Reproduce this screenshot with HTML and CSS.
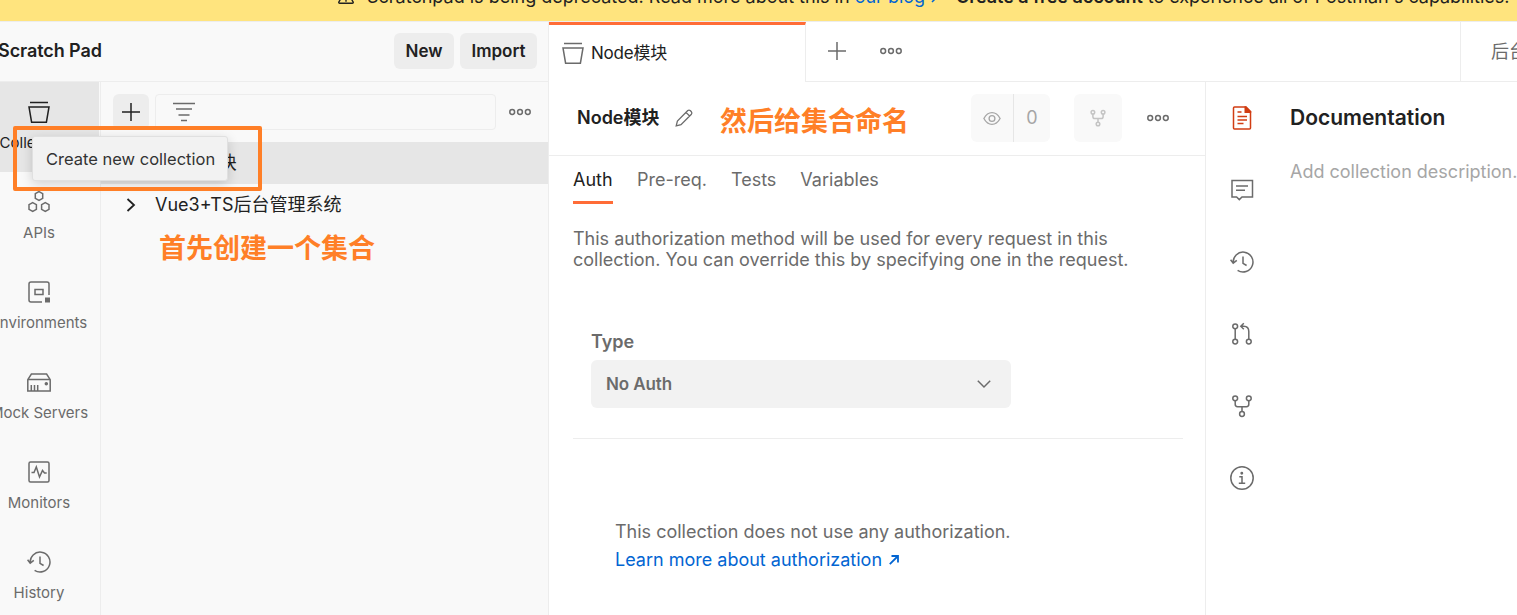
FILE: index.html
```html
<!DOCTYPE html>
<html lang="en">
<head>
<meta charset="utf-8">
<title>Scratch Pad</title>
<link rel="stylesheet" href="styles.css">
</head>
<body>
<svg class="defs" aria-hidden="true">
  <symbol id="i-collection" viewBox="0 0 24 24"><path d="M3 2.5h18M2 7h20l-2.6 15.2H4.6z"/></symbol>
  <symbol id="i-dots" viewBox="0 0 22 8"><circle cx="3.2" cy="4" r="2.4"/><circle cx="11" cy="4" r="2.4"/><circle cx="18.8" cy="4" r="2.4"/></symbol>
  <symbol id="i-plus" viewBox="0 0 18 18"><path d="M9 0v18M0 9h18"/></symbol>
  <symbol id="i-history" viewBox="0 0 24 24"><path d="M3.2 13A9.9 9.9 0 1 1 7.6 20.3M.6 9.8l2.6 3.4 3.6-2.8M13 6.5v6.8l3.6 2.2"/></symbol>
  <symbol id="i-fork" viewBox="0 0 24 24"><circle cx="5.2" cy="4.3" r="2.4"/><circle cx="18.8" cy="4.3" r="2.4"/><circle cx="12" cy="20" r="2.4"/><path d="M5.2 6.7v3.6q0 2.4 2.4 2.4h8.8q2.4 0 2.4-2.4V6.7M12 12.7v4.9"/></symbol>
</svg>

<div class="banner">
  <svg class="warn" viewBox="0 0 20 18"><path d="M10 1.5 18 15.2Q18.4 16.5 17 16.5H3Q1.6 16.5 2 15.2zM10 7v4.5M10 13v1.8"/></svg>
  <span class="b1">Scratchpad is being deprecated. Read more about this in <a class="link">our blog</a></span>
  <svg class="barrow" viewBox="0 0 10 10"><path d="M1 9 9 1M3 1h6v6"/></svg>
  <span class="b2"><b>Create a free account</b> to experience all of Postman's capabilities.</span>
</div>

<div class="app">
  <aside class="side">
    <header class="side-head">
      <h1>Scratch Pad</h1>
      <button class="btn new">New</button>
      <button class="btn import">Import</button>
    </header>
    <div class="side-body">
      <nav class="rail">
        <div class="rail-item active"><svg class="ic dark" viewBox="0 0 24 24"><use href="#i-collection"/></svg><span>Collections</span></div>
        <div class="rail-item"><svg class="ic" viewBox="0 0 24 24"><path d="M12 1.6 15.7 3.7V8.3L12 10.4 8.3 8.3V3.7zM5.7 12.6 9.4 14.7V19.3L5.7 21.4 2 19.3V14.7zM18.3 12.6 22 14.7V19.3L18.3 21.4 14.6 19.3V14.7z"/></svg><span>APIs</span></div>
        <div class="rail-item"><svg class="ic" viewBox="0 0 24 24"><path d="M15 22H4q-2 0-2-2V4q0-2 2-2h16q2 0 2 2v11M8 9.5h8v5H8z"/><path class="block" d="M18 17.500h5v5h-5z"/></svg><span>Environments</span></div>
        <div class="rail-item"><svg class="ic" viewBox="0 0 24 24"><path d="M.8 9.6 4.4 4h15.2l3.6 5.6V21H.8zM.8 9.6h22.4M4.3 15v6M7.5 15v6M10.7 15v6"/><circle class="solid" cx="19.3" cy="13.8" r="1"/></svg><span>Mock Servers</span></div>
        <div class="rail-item"><svg class="ic" viewBox="0 0 24 24"><rect x="2" y="2" width="20" height="20" rx="1.5"/><path d="M4.5 12.5H7L9.3 7l3.2 10 3-6.5 2 2.5h2.2"/></svg><span>Monitors</span></div>
        <div class="rail-item"><svg class="ic" viewBox="0 0 24 24"><use href="#i-history"/></svg><span>History</span></div>
      </nav>
      <section class="tree">
        <div class="tree-tools">
          <button class="add"><svg class="plus dark" viewBox="0 0 18 18"><use href="#i-plus"/></svg></button>
          <div class="filter"><svg viewBox="0 0 22 20"><path d="M0 1.5h22M3 7h16M5.5 13h11M8 18.5h6"/></svg></div>
          <svg class="dots" viewBox="0 0 22 8"><use href="#i-dots"/></svg>
        </div>
        <div class="tree-row selected"><svg class="chev" viewBox="0 0 10 14"><path d="M1.5 1 8 7l-6.500 6"/></svg><span>Node模块</span></div>
        <div class="tree-row"><svg class="chev" viewBox="0 0 10 14"><path d="M1.5 1 8 7l-6.500 6"/></svg><span>Vue3+TS后台管理系统</span></div>
      </section>
    </div>
  </aside>

  <main class="main">
    <div class="tabbar">
      <div class="tab"><svg class="ic" viewBox="0 0 24 24"><use href="#i-collection"/></svg><span>Node模块</span></div>
      <div class="tabtools">
        <svg class="plus" viewBox="0 0 18 18"><use href="#i-plus"/></svg>
        <svg class="dots" viewBox="0 0 22 8"><use href="#i-dots"/></svg>
      </div>
      <div class="env">后台管理系统</div>
    </div>
    <div class="work">
      <section class="editor">
        <div class="titlebar">
          <h2>Node模块</h2>
          <svg class="pencil" viewBox="0 0 18 18"><path d="M1.2 16.8 2.4 12 12.8 1.6q1.2-1 2.4 0l1.2 1.2q1 1.2 0 2.4L6 15.6zM11 3.4l3.600 3.600"/></svg>
          <div class="watch"><span class="eye"><svg viewBox="0 0 20 16"><path d="M1 8Q4.500 1.500 10 1.500T19 8Q15.500 14.500 10 14.500T1 8z"/><circle cx="10" cy="8" r="3.200"/></svg></span><span class="count">0</span></div>
          <div class="forkbtn"><svg viewBox="0 0 24 24"><use href="#i-fork"/></svg></div>
          <svg class="dots" viewBox="0 0 22 8"><use href="#i-dots"/></svg>
        </div>
        <div class="subtabs"><span class="st on">Auth</span><span class="st">Pre-req.</span><span class="st">Tests</span><span class="st">Variables</span></div>
        <p class="desc">This authorization method will be used for every request in this<br>collection. You can override this by specifying one in the request.</p>
        <div class="typebox">
          <label>Type</label>
          <div class="select"><span>No Auth</span><svg viewBox="0 0 14 8"><path d="M.8.8 7 7 13.200.8"/></svg></div>
        </div>
        <div class="none">
          <p>This collection does not use any authorization.</p>
          <a class="link">Learn more about authorization<svg viewBox="0 0 10 10"><path d="M.8 9.200 9 1M2.500 1H9v6.500"/></svg></a>
        </div>
      </section>
      <aside class="context">
        <div class="ctx-icons">
          <svg class="ic red" viewBox="0 0 24 24"><path d="M4.500 1H16l4.500 4.500V22q0 1-1 1h-15q-1 0-1-1V2q0-1 1-1zM7.500 6h4M7.500 10.500h9.500M7.500 14h9.500M7.500 17.500h6"/><path class="block" d="M14.500.3H16l5.200 5.200V7h-6.700z"/></svg>
          <svg class="ic" viewBox="0 0 24 24"><path d="M2 2.500h20.500V19H12l-2.700 2.600L6.600 19H2zM6 8h12M6 12.200h9"/></svg>
          <svg class="ic" viewBox="0 0 24 24"><use href="#i-history"/></svg>
          <svg class="ic" viewBox="0 0 24 24"><circle cx="5.200" cy="4.300" r="2.400"/><circle cx="5.200" cy="19.600" r="2.400"/><circle cx="18.800" cy="19.600" r="2.400"/><path d="M5.200 6.700v10.500M18.800 17.200V9.500q0-5-5-5.200h-2.500M13.800 1.300l-3 3 3 3"/></svg>
          <svg class="ic" viewBox="0 0 24 24"><use href="#i-fork"/></svg>
          <svg class="ic" viewBox="0 0 24 24"><circle cx="12" cy="12" r="11.200"/><path d="M9.300 10.800H12v6.400M8.800 17.200h6.400"/><circle class="solid" cx="11.800" cy="7.300" r=".7"/></svg>
        </div>
        <div class="doc"><h3>Documentation</h3><p>Add collection description...</p></div>
      </aside>
    </div>
  </main>
</div>

<div class="tooltip">Create new collection</div>
<div class="frame"></div>
<div class="note note-create">首先创建一个集合</div>
<div class="note note-name">然后给集合命名</div>
</body>
</html>
```
FILE: styles.css
```css
* { box-sizing: border-box; margin: 0; padding: 0; }
body {
  width: 1517px; height: 615px; overflow: hidden; background: #fff; color: #212121;
  font: 18px/24px Inter, "Noto Sans CJK SC", sans-serif;
}
h1, h2, h3 { font-size: 18px; font-weight: 600; }
button { border: 0; font: inherit; color: inherit; }
svg { display: block; flex: none; fill: none; stroke: #6b6b6b; stroke-width: 1.5; overflow: visible; }
svg .solid { fill: #6b6b6b; }
svg .block { fill: #6b6b6b; stroke: none; }
.defs { position: absolute; width: 0; height: 0; }
.ic { width: 24px; height: 24px; }
svg.dark { stroke: #212121; }
.link { color: #0265d2; }
.plus { width: 18px; height: 18px; }
.dots { width: 22px; height: 8px; }

.banner { display: flex; height: 22px; overflow: hidden; background: #ffe47e; border-bottom: 1px solid #ededed; padding-left: 337px; white-space: nowrap; }
.banner span { margin-top: -15px; }
.warn { width: 18px; height: 17px; margin: -12px 12px 0 0; stroke: #212121; }
.b1 { width: 564px; }
.barrow { width: 10px; height: 10px; margin: -7px 15px 0 0; stroke: #0265d2; }
.b2 { letter-spacing: -.04px; }
.banner b { font-weight: 600; }

.app { display: flex; height: 593px; overflow: hidden; }
.side { flex: none; width: 549px; background: #f9f9f9; border-right: 1px solid #ededed; display: flex; flex-direction: column; }
.side-head { flex: none; display: flex; align-items: center; height: 60px; padding: 0 11px 2px 0; border-bottom: 1px solid #ededed; gap: 6px; }
.side-head h1 { flex: 1; margin-left: -2px; white-space: nowrap; letter-spacing: -.08px; }
.btn { height: 36px; border-radius: 6px; background: #ededed; font-weight: 600; font-size: 17px; }
.new { width: 60px; }
.import { width: 77px; }
.side-body { display: flex; flex: 1; }
.rail { width: 101px; border-right: 1px solid #ededed; font-size: 15px; color: #6b6b6b; }
.rail-item { width: 99px; height: 90px; display: flex; flex-direction: column; align-items: center; padding: 18px 21px 0 0; gap: 7px; }
.rail-item span { white-space: nowrap; }
.rail-item.active { background: #e6e6e6; color: #212121; }
.tree { flex: 1; }
.tree-tools { display: flex; align-items: center; height: 60px; padding-left: 12px; }
.add { display: flex; align-items: center; justify-content: center; width: 36px; height: 36px; border-radius: 6px; background: #ededed; }
.filter { width: 341px; height: 36px; margin: 0 13px 0 6px; padding: 7px 17px; border: 1px solid #ededed; border-radius: 4px; }
.filter svg { width: 22px; height: 20px; }
.tree-row { display: flex; align-items: center; height: 42px; padding-left: 25px; white-space: nowrap; }
.tree-row.selected { background: #e6e6e6; }
.chev { width: 10px; height: 14px; margin-right: 19px; stroke: #212121; stroke-width: 1.8; }

.main { flex: none; width: 968px; display: flex; flex-direction: column; }
.tabbar { flex: none; display: flex; height: 60px; }
.tab { display: flex; align-items: center; gap: 6px; width: 257px; padding: 0 0 2px 12px; border-top: 3px solid #ff6c37; border-right: 1px solid #ededed; font-size: 17px; letter-spacing: -.2px; }
.tabtools { flex: 1; display: flex; align-items: center; gap: 34px; padding: 0 0 1px 22px; border-bottom: 1px solid #ededed; }
.env { width: 57px; padding: 18px 0 0 30px; overflow: hidden; white-space: nowrap; border-left: 1px solid #ededed; border-bottom: 1px solid #ededed; color: #6b6b6b; }
.work { display: flex; flex: 1; }
.editor { width: 656px; }
.titlebar { display: flex; align-items: center; height: 74px; padding: 0 0 1px 28px; border-bottom: 1px solid #ededed; }
.titlebar h2 { width: 98px; white-space: nowrap; }
.pencil { width: 18px; height: 18px; margin-right: 278px; stroke-width: 1.3; }
.watch { display: flex; width: 79px; height: 48px; margin-right: 24px; border-radius: 6px; background: #f9f9f9; color: #a6a6a6; }
.watch span { display: flex; align-items: center; justify-content: center; }
.eye { width: 43px; border-right: 1px solid #e6e6e6; }
.eye svg { width: 18px; height: 15px; stroke: #a6a6a6; }
.count { flex: 1; }
.forkbtn { display: flex; align-items: center; justify-content: center; width: 48px; height: 48px; margin-right: 25px; border-radius: 6px; background: #f9f9f9; }
.forkbtn svg { width: 18px; height: 18px; stroke: #c4c4c4; stroke-width: 2; }
.subtabs { display: flex; height: 48px; padding: 12px 24px 0; color: #6b6b6b; }
.st { height: 36px; margin-right: 24px; white-space: nowrap; }
.st.on { width: 40px; color: #212121; border-bottom: 3px solid #ff6c37; }
.desc { margin: 24px 0 0 24px; line-height: 21px; color: #6b6b6b; white-space: nowrap; }
.typebox { width: 610px; height: 169px; margin-left: 24px; padding: 60px 18px 0; border-bottom: 1px solid #ededed; color: #6b6b6b; font-weight: 600; }
.typebox label { display: block; height: 30px; }
.select { display: flex; align-items: center; justify-content: space-between; width: 420px; height: 48px; padding: 0 20px 0 15px; border-radius: 6px; background: #f2f2f2; font-size: 17px; }
.select span { letter-spacing: -.1px; }
.select svg { width: 14px; height: 8px; }
.none { margin: 79px 0 0 66px; line-height: 28px; color: #6b6b6b; white-space: nowrap; }
.none a { display: flex; align-items: center; gap: 7px; }
.none a svg { width: 10px; height: 10px; stroke: #0265d2; stroke-width: 1.8; }
.context { display: flex; width: 312px; border-left: 1px solid #ededed; overflow: hidden; }
.ctx-icons { flex: none; display: flex; flex-direction: column; gap: 48px; width: 84px; padding: 24px 0 0 24px; }
svg.red { stroke: #d13d13; }
.red .block { fill: #d13d13; }
.doc { padding-top: 24px; white-space: nowrap; }
.doc h3 { font-size: 21px; }
.doc p { margin-top: 30px; color: #a6a6a6; }

.tooltip { position: absolute; left: 32px; top: 136px; width: 196px; height: 45px; padding-left: 13px; line-height: 44px; font-size: 16.5px; white-space: nowrap; background: #f2f2f2; border: 1px solid #e0e0e0; border-radius: 3px; box-shadow: 0 3px 12px rgba(0,0,0,.16); color: #333; }
.frame { position: absolute; left: 13px; top: 126px; width: 249px; height: 65px; border: 4px solid #ff7f27; border-radius: 2px; }
.note { position: absolute; color: #ff7f27; font: 700 27px/36px "Noto Sans CJK SC", sans-serif; white-space: nowrap; }
.note-create { left: 159px; top: 229px; }
.note-name { left: 720px; top: 102px; }
```
